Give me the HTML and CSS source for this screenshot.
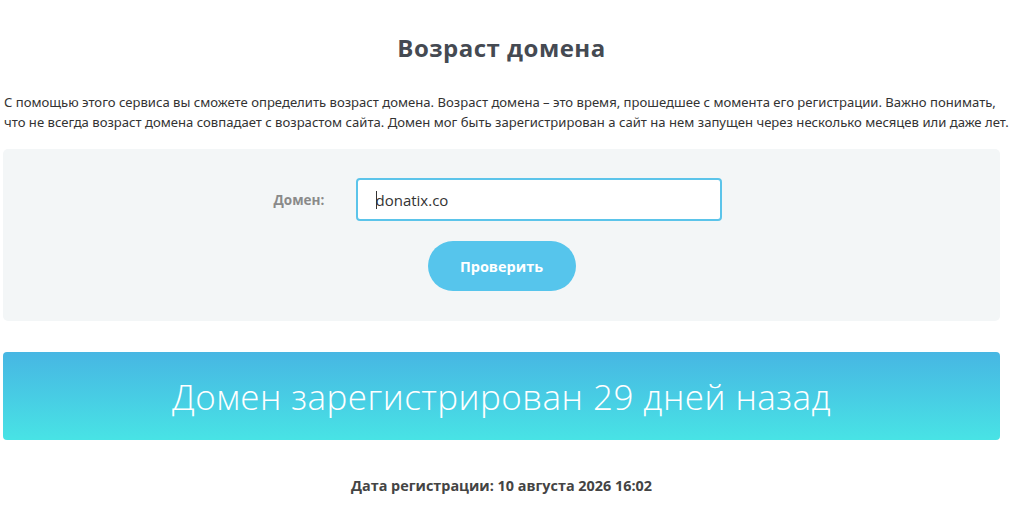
FILE: index.html
```html
<!DOCTYPE html>
<html lang="ru">
<head>
<meta charset="utf-8">
<title>Возраст домена</title>
<link rel="stylesheet" href="styles.css">
</head>
<body>
<main class="page">
  <h1 class="title">Возраст домена</h1>
  <p class="intro">С помощью этого сервиса вы сможете определить возраст домена. Возраст домена – это время, прошедшее с момента его регистрации. Важно понимать, что не всегда возраст домена совпадает с возрастом сайта. Домен мог быть зарегистрирован а сайт на нем запущен через несколько месяцев или даже лет.</p>
  <form class="panel">
    <div class="field">
      <label class="label" for="domain">Домен:</label>
      <div class="input" id="domain"><span class="caret"></span>donatix.co</div>
    </div>
    <button class="btn" type="button">Проверить</button>
  </form>
  <div class="result">Домен зарегистрирован 29 дней назад</div>
  <p class="date">Дата регистрации: 10 августа 2026 16:02</p>
</main>
</body>
</html>
```
FILE: styles.css
```css
html, body {
  margin: 0;
  padding: 0;
  background: #fff;
}
body {
  font-family: "Open Sans", "Noto Sans", sans-serif;
  color: #333;
}
.page {
  width: 997px;
  margin-left: 3px;
  padding-top: 33px;
}
.title {
  margin: 0;
  text-align: center;
  font-size: 24px;
  line-height: 30px;
  font-weight: 700;
  letter-spacing: 0.5px;
  color: #454a52;
}
.intro {
  width: 1010px;
  margin: 29px 0 0 1px;
  font-family: "Noto Sans", sans-serif;
  font-size: 13.1px;
  line-height: 20px;
  color: #333;
}
.panel {
  margin-top: 17px;
  background: #f3f6f7;
  border-radius: 5px;
  height: 172px;
  box-sizing: border-box;
  padding-top: 29px;
  display: flex;
  flex-direction: column;
  align-items: center;
}
.field {
  display: flex;
  align-items: center;
  margin-right: 8px;
}
.label {
  width: 82px;
  font-size: 13.5px;
  font-weight: 700;
  color: #8a8a8a;
}
.input {
  box-sizing: border-box;
  width: 366px;
  height: 43px;
  border: 2px solid #5bc4ea;
  border-radius: 4px;
  background: #fff;
  padding-left: 18px;
  display: flex;
  align-items: center;
  font-size: 15px;
  color: #333;
}
.caret {
  width: 1px;
  height: 18px;
  background: #333;
  margin-right: -1px;
}
.btn {
  margin-top: 20px;
  width: 148px;
  height: 50px;
  border: none;
  border-radius: 25px;
  background: #56c5ec;
  color: #fff;
  font-family: "Open Sans", sans-serif;
  font-size: 14.5px;
  font-weight: 700;
}
.result {
  margin-top: 31px;
  height: 88px;
  border-radius: 4px;
  background: linear-gradient(to bottom, #47b6e3, #48e3e5);
  color: #fff;
  display: flex;
  align-items: center;
  justify-content: center;
  font-size: 35px;
  letter-spacing: 0.45px;
  font-weight: 300;
}
.date {
  margin: 36px 0 0;
  text-align: center;
  font-size: 14.4px;
  font-weight: 700;
  color: #444;
}
```
